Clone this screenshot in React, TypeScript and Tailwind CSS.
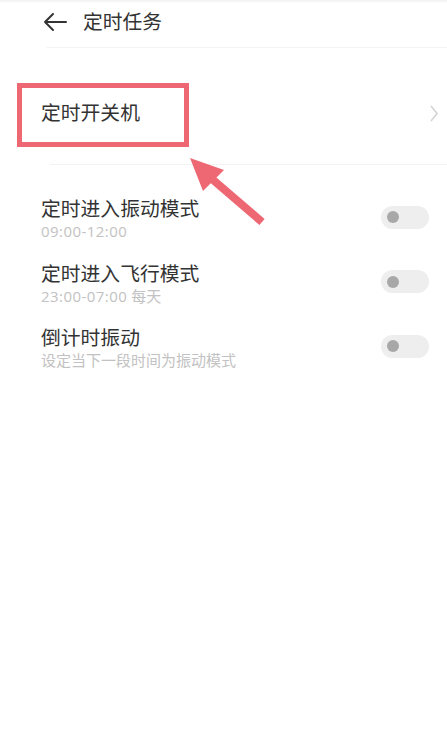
import React from "react";

const font = { fontFamily: '"Noto Sans CJK SC", "Noto Sans", sans-serif' };
const subFont = { fontFamily: '"Open Sans", "Noto Sans CJK SC", sans-serif' };

function Toggle() {
  return (
    <div className="mb-[2px] flex h-[23px] w-[48px] shrink-0 items-center rounded-full bg-[#eeeeee] pl-[6px]">
      <div className="h-[12px] w-[12px] rounded-full bg-[#a8a8a8]" />
    </div>
  );
}

function Row({ title, time, sub }: { title: string; time?: string; sub?: string }) {
  return (
    <div className="flex h-[64.5px] items-center justify-between pl-[41px] pr-[18px]">
      <div className="flex flex-col">
        <div className="text-[19.8px] leading-[26px] text-[#333333]">{title}</div>
        <div className="text-[15px] leading-[20px] text-[#c2c2c2]" style={subFont}>
          {time && <span className="tracking-[0.45px]">{time}</span>}
          {sub}
        </div>
      </div>
      <Toggle />
    </div>
  );
}

export default function App() {
  return (
    <div className="relative h-[738px] w-[447px] overflow-hidden bg-white" style={font}>
      <div className="h-[3px] w-full bg-gradient-to-b from-[#f0f0f0] to-white" />
      <div className="flex h-[44px] items-center pb-[9px]">
        <svg width="24" height="20" viewBox="0 0 24 20" className="ml-[43px] mt-[2px]">
          <path d="M2 10 H23 M10 2 L2 10 L10 18" fill="none" stroke="#333" strokeWidth="2" strokeLinecap="round" strokeLinejoin="round" />
        </svg>
        <div className="ml-[16px] text-[19.8px] leading-[26px] text-[#333333]">定时任务</div>
      </div>
      <div className="ml-[47px] h-px bg-[#f3f3f3]" />
      <div className="flex items-center justify-between pb-[38px] pl-[41px] pr-[8px] pt-[50px]">
        <div className="text-[19.8px] leading-[28px] text-[#333333]">定时开关机</div>
        <svg width="10" height="17" viewBox="0 0 10 17" className="mt-[2px]">
          <path d="M2 1 L8 8.5 L2 16" fill="none" stroke="#d4d4d4" strokeWidth="1.6" />
        </svg>
      </div>
      <div className="ml-[50px] h-px bg-[#f3f3f3]" />
      <div className="pt-[21px]">
        <Row title="定时进入振动模式" time="09:00-12:00" />
        <Row title="定时进入飞行模式" time="23:00-07:00" sub=" 每天" />
        <Row title="倒计时振动" sub="设定当下一段时间为振动模式" />
      </div>

      <div className="absolute left-[17px] top-[83px] h-[64px] w-[172px] border-[5px] border-[#ee6874]" />
      <svg className="absolute left-0 top-0" width="447" height="738" viewBox="0 0 447 738">
        <line x1="262" y1="222" x2="212" y2="179" stroke="#ee6874" strokeWidth="8" />
        <polygon points="190,158 224,170 203,191" fill="#ee6874" />
      </svg>
    </div>
  );
}
